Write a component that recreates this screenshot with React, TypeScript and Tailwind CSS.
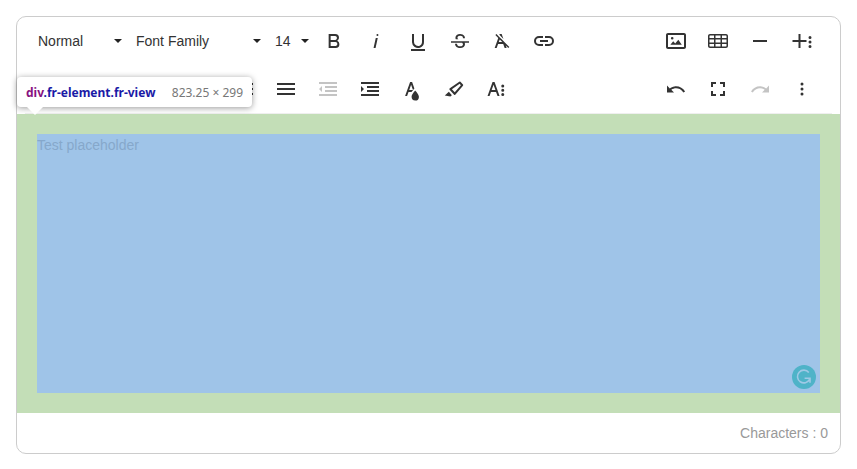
import { useState, type ReactNode } from 'react'

const icons = {
  bold: 'M15.25,11.8h0A3.68,3.68,0,0,0,17,9a3.93,3.93,0,0,0-3.86-4H6.65V19h7a3.74,3.74,0,0,0,3.7-3.78V15.1A3.64,3.64,0,0,0,15.25,11.8ZM8.65,7h4.2a2.09,2.09,0,0,1,2,1.3,2.09,2.09,0,0,1-1.37,2.61,2.23,2.23,0,0,1-.63.09H8.65Zm4.6,10H8.65V13h4.6a2.09,2.09,0,0,1,2,1.3,2.09,2.09,0,0,1-1.37,2.61A2.23,2.23,0,0,1,13.25,17Z',
  italic: 'M11.76,9h2l-2.2,10h-2Zm1.68-4a1,1,0,1,0,1,1,1,1,0,0,0-1-1Z',
  underline: 'M19,20v2H5V20Zm-3-6.785a4,4,0,0,1-5.74,3.4A3.75,3.75,0,0,1,8,13.085V5.005H6v8.21a6,6,0,0,0,8,5.44,5.851,5.851,0,0,0,4-5.65v-8H16Z',
  strike: 'M3,12.2H21v1.5H16.63a3.6,3.6,0,0,1,.35,1.59,3.25,3.25,0,0,1-1.31,2.7A5.55,5.55,0,0,1,12.2,19a6.44,6.44,0,0,1-2.62-.54,4.46,4.46,0,0,1-1.89-1.49,3.67,3.67,0,0,1-.67-2.15V14.7H9.02v.11a2.18,2.18,0,0,0,.85,1.83,3.69,3.69,0,0,0,2.33.68,3.39,3.39,0,0,0,2.08-.55,1.73,1.73,0,0,0,.7-1.46,1.7,1.7,0,0,0-.65-1.43,3,3,0,0,0-.27-.18H3ZM16.34,7.06A4.18,4.18,0,0,0,14.62,5.55,5.63,5.63,0,0,0,12.11,5,5.16,5.16,0,0,0,8.75,6.06,3.36,3.36,0,0,0,7.44,8.77a3.23,3.23,0,0,0,.32,1.43h2.6c-.08-.05-.19-.11-.25-.16a1.61,1.61,0,0,1-.65-1.3,1.8,1.8,0,0,1,.69-1.51,3.13,3.13,0,0,1,1.97-.55,3.05,3.05,0,0,1,2.1.67,2.35,2.35,0,0,1,.74,1.83v.11h2V9.17A3.9,3.9,0,0,0,16.34,7.06Z',
  clear: 'M11.48,10.09l-1.2-1.21L8.8,7.41,6.43,5,5.37,6.1,8.25,9,4.66,19h2l1.43-4h5.14l1.43,4h2l-.89-2.51L18.27,19l1.07-1.06L14.59,13.2ZM8.8,13l.92-2.56L12.27,13Zm.56-7.15L9.66,5h2l1.75,4.9Z',
  link: 'M11,17H7A5,5,0,0,1,7,7h4V9H7a3,3,0,0,0,0,6h4ZM17,7H13V9h4a3,3,0,0,1,0,6H13v2h4A5,5,0,0,0,17,7Zm-1,4H8v2h8Z',
  image: 'M14.3,10.8L17.8,15.8H6.4l2.8-3.6l2,2.4z M8.2,10.6a1.3,1.3,0,1,0,0-2.6a1.3,1.3,0,0,0,0,2.6z M22,6v12c0,1.1-0.9,2-2,2H4c-1.1,0-2-0.9-2-2V6c0-1.1,0.9-2,2-2h16C21.1,4,22,4.9,22,6z M20,8.8V6H4v12h16V8.8z',
  table: 'M20,5H4C2.9,5,2,5.9,2,7v10c0,1.1,0.9,2,2,2h16c1.1,0,2-0.9,2-2V7C22,5.9,21.1,5,20,5z M9.5,13.5v-3h5v3H9.5z M14.5,15v2.5h-5V15H14.5z M9.5,9V6.5h5V9H9.5z M3.5,7c0-0.3,0.2-0.5,0.5-0.5h4V9H3.5V7z M3.5,10.5H8v3H3.5V10.5z M3.5,17v-2H8v2.5H4C3.7,17.5,3.5,17.3,3.5,17z M20.5,17c0,0.3-0.2,0.5-0.5,0.5h-4V15h4.5V17z M20.5,13.5H16v-3h4.5V13.5z M16,9V6.5h4c0.3,0,0.5,0.2,0.5,0.5v2H16z',
  rule: 'M5,11h14v2H5Z',
  moreRich: 'M16.5,13h-6v6h-2V13h-6V11h6V5h2v6h6Zm5,4.5A1.5,1.5,0,1,1,20,16,1.5,1.5,0,0,1,21.5,17.5Zm0-4.5A1.5,1.5,0,1,1,20,11.5,1.5,1.5,0,0,1,21.5,13Zm0-4.5A1.5,1.5,0,1,1,20,7,1.5,1.5,0,0,1,21.5,8.5Z',
  list: 'M3,6h2v2H3Zm0,5h2v2H3Zm0,5h2v2H3ZM8,6h13v2H8Zm0,5h13v2H8Zm0,5h13v2H8Z',
  justify: 'M3,6h18v2H3Zm0,5h18v2H3Zm0,5h18v2H3Z',
  outdent: 'M3,12l3,3V9L3,12z M3,19h18v-2H3V19z M3,7h18V5H3V7z M9,11h12V9H9V11z M9,15h12v-2H9V15z',
  indent: 'M3,9v6l3-3L3,9z M3,19h18v-2H3V19z M3,7h18V5H3V7z M9,11h12V9H9V11z M9,15h12v-2H9V15z',
  textColor: 'M15.2,13.494s-3.6,3.9-3.6,6.3a3.65,3.65,0,0,0,7.3.1v-.1C18.9,17.394,15.2,13.494,15.2,13.494Zm-1.47-1.357.669-.724L12.1,5h-2l-5,14h2l1.43-4h2.943A24.426,24.426,0,0,1,13.726,12.137ZM11.1,7.8l1.86,5.2H9.244Z',
  highlight: 'M9.918,12.241l7.748-5.39,1.179,1.296-6.094,7.207L9.918,12.241M7.587,12.652l4.535,4.983a.934.934,0,0,0,1.395-.091L20.969,8.731A.908.908,0,0,0,20.991,7.533l-2.513-2.761a.908.908,0,0,0-1.195-.091L7.809,11.271A.934.934,0,0,0,7.587,12.652ZM2.794,18.528,8.411,19.5l1.479-1.346-3.029-3.328Z',
  moreText: 'M13.55,19h2l-5-14h-2l-5,14h2l1.4-4h5.1ZM7.65,13l1.9-5.2,1.9,5.2Zm12.6,4.5a1.5,1.5,0,1,1-1.5-1.5A1.5,1.5,0,0,1,20.25,17.5Zm0-4.2a1.5,1.5,0,1,1-1.5-1.5A1.5,1.5,0,0,1,20.25,13.3Zm0-4.2a1.5,1.5,0,1,1-1.5-1.5A1.5,1.5,0,0,1,20.25,9.1Z',
  undo: 'M10.4,9.4c-1.7,0.3-3.2,0.9-4.6,2L3,8.5v7h7l-2.7-2.7c3.7-2.6,8.8-1.8,11.5,1.9c0.2,0.3,0.4,0.5,0.5,0.8l1.8-0.9C18.9,10.8,14.7,8.7,10.4,9.4z',
  fullscreen: 'M7,14H5v5h5V17H7ZM5,10H7V7h3V5H5Zm12,7H14v2h5V14H17ZM14,5V7h3v3h2V5Z',
  redo: 'M13.6,9.4c1.7,0.3,3.2,0.9,4.6,2L21,8.5v7h-7l2.7-2.7C13,10.1,7.9,11,5.3,14.7c-0.2,0.3-0.4,0.5-0.5,0.8L3,14.6C5.1,10.8,9.3,8.7,13.6,9.4z',
  moreMisc: 'M13.5,17a1.5,1.5,0,1,1-1.5-1.5A1.5,1.5,0,0,1,13.5,17Zm0-5a1.5,1.5,0,1,1-1.5-1.5A1.5,1.5,0,0,1,13.5,12Zm0-5A1.5,1.5,0,1,1,12,5.5,1.5,1.5,0,0,1,13.5,7Z',
}

type Tool = { icon: keyof typeof icons; label: string; disabled?: boolean }

const formatTools: Tool[] = [
  { icon: 'bold', label: 'Bold' },
  { icon: 'italic', label: 'Italic' },
  { icon: 'underline', label: 'Underline' },
  { icon: 'strike', label: 'Strikethrough' },
  { icon: 'clear', label: 'Clear Formatting' },
  { icon: 'link', label: 'Insert Link' },
]

const insertTools: Tool[] = [
  { icon: 'image', label: 'Insert Image' },
  { icon: 'table', label: 'Insert Table' },
  { icon: 'rule', label: 'Insert Horizontal Line' },
  { icon: 'moreRich', label: 'More Rich' },
]

const paragraphTools: Tool[] = [
  { icon: 'list', label: 'Unordered List' },
  { icon: 'justify', label: 'Align' },
  { icon: 'outdent', label: 'Decrease Indent', disabled: true },
  { icon: 'indent', label: 'Increase Indent' },
  { icon: 'textColor', label: 'Text Color' },
  { icon: 'highlight', label: 'Background Color' },
  { icon: 'moreText', label: 'More Text' },
]

const miscTools: Tool[] = [
  { icon: 'undo', label: 'Undo' },
  { icon: 'fullscreen', label: 'Fullscreen' },
  { icon: 'redo', label: 'Redo', disabled: true },
  { icon: 'moreMisc', label: 'More Misc' },
]

function ToolGroup({ tools }: { tools: Tool[] }) {
  return (
    <div className="flex shrink-0 gap-1">
      {tools.map((tool) => (
        <button
          key={tool.icon}
          type="button"
          aria-label={tool.label}
          disabled={tool.disabled}
          className="flex h-10 w-[38px] cursor-pointer items-center justify-center rounded text-[#333] hover:bg-neutral-100 disabled:cursor-default disabled:text-[#c4c4c4]"
        >
          <svg viewBox="0 0 24 24" className="size-6 fill-current">
            <path d={icons[tool.icon]} />
          </svg>
        </button>
      ))}
    </div>
  )
}

function ToolSelect({
  label,
  options,
  className,
}: {
  label: string
  options: string[]
  className: string
}) {
  return (
    <div className={`relative flex shrink-0 items-center ${className}`}>
      <select
        aria-label={label}
        className="w-full cursor-pointer appearance-none bg-transparent text-sm text-[#333] outline-none"
      >
        {options.map((option) => (
          <option key={option}>{option}</option>
        ))}
      </select>
      <svg
        viewBox="0 0 8 4"
        className="pointer-events-none absolute right-0 h-1 w-2 fill-[#222]"
      >
        <path d="M0 0h8L4 4z" />
      </svg>
    </div>
  )
}

function ToolbarRow({ children }: { children: ReactNode }) {
  return <div className="flex h-12 items-center justify-between">{children}</div>
}

function InspectTip() {
  return (
    <div className="absolute top-[60px] left-0 flex h-[30px] min-w-[235px] items-center justify-between gap-[10px] rounded bg-white px-[9px] pt-px font-['Noto_Sans',sans-serif] text-xs whitespace-nowrap shadow-[0_1px_6px_rgba(0,0,0,0.4)]">
      <span className="font-bold text-[#1a1aa6]">
        <span className="text-[#881280]">div</span>.fr-element.fr-view
      </span>
      <span className="text-[#777]">823.25 × 299</span>
      <svg viewBox="0 0 16 8" className="absolute top-full left-[10px] h-2 w-4 fill-white">
        <path d="M0 0h16L8 8z" />
      </svg>
    </div>
  )
}

export default function App() {
  const [text, setText] = useState('')

  return (
    <main className="bg-white p-4 font-['Liberation_Sans',Arial,sans-serif] text-sm">
      <div className="relative rounded-[10px] border border-[#ccc]">
        <div
          role="toolbar"
          aria-label="Formatting"
          className="mx-2 border-b border-[#efefef] pr-[11px] pl-[13px]"
        >
          <ToolbarRow>
            <div className="flex items-center gap-[14px]">
              <ToolSelect
                label="Paragraph format"
                options={['Normal', 'Heading 1', 'Heading 2']}
                className="w-[84px]"
              />
              <ToolSelect
                label="Font family"
                options={['Font Family', 'Arial', 'Georgia']}
                className="w-[125px]"
              />
              <ToolSelect
                label="Font size"
                options={['14', '18', '24']}
                className="w-[34px]"
              />
              <div className="-ml-2">
                <ToolGroup tools={formatTools} />
              </div>
            </div>
            <ToolGroup tools={insertTools} />
          </ToolbarRow>
          <ToolbarRow>
            <div className="pl-[187px]">
              <ToolGroup tools={paragraphTools} />
            </div>
            <ToolGroup tools={miscTools} />
          </ToolbarRow>
        </div>

        <div className="relative bg-[#c3deb7] p-5">
          <textarea
            aria-label="Editor content"
            value={text}
            onChange={(e) => setText(e.target.value)}
            placeholder="Test placeholder"
            className="block h-[259px] w-full resize-none bg-[#9fc4e8] pt-px leading-5 text-[#333] outline-none placeholder:text-[#86a8cb]"
          />
          <button
            type="button"
            aria-label="Writing suggestions"
            className="absolute right-6 bottom-6 size-6 cursor-pointer"
          >
            <svg viewBox="0 0 24 24" fill="none" className="size-6">
              <circle cx="12" cy="12" r="12" fill="#4fb3c8" />
              <path
                d="M16.8 7.4A6.4 6.4 0 1 0 17.6 14.4M12.6 13.2h5.4v4.6"
                stroke="#9fc9e6"
                strokeWidth="1.6"
              />
            </svg>
          </button>
        </div>

        <div className="flex h-10 items-center justify-end px-3 text-[#999]">
          Characters : {text.length}
        </div>

        <InspectTip />
      </div>
    </main>
  )
}
